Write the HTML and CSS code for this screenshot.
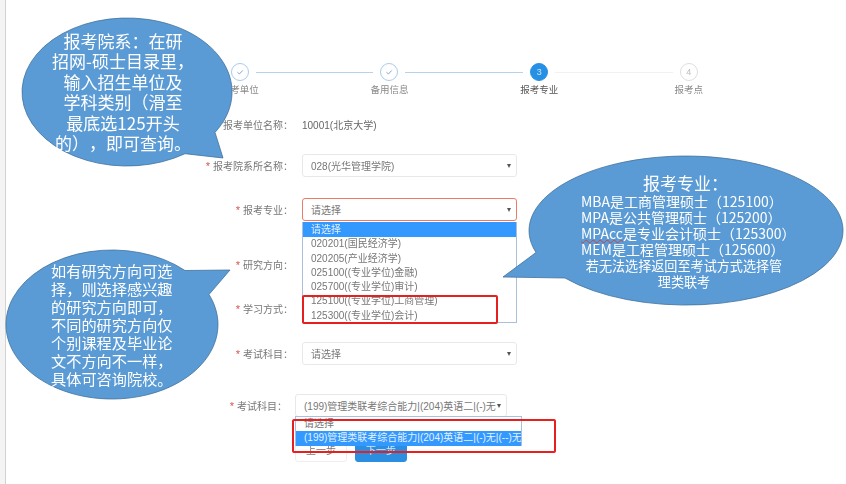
FILE: index.html
```html
<!DOCTYPE html>
<html lang="zh-CN">
<head>
<meta charset="utf-8">
<title>报考专业</title>
<link rel="stylesheet" href="styles.css">
</head>
<body>
<div class="page">
  <div class="rail"></div>
  <main class="main">
    <ol class="steps">
      <li class="step done first">
        <div class="track"><i class="seg"></i><span class="dot"><svg viewBox="0 0 10 10"><path d="M2.4 5.2 4.4 7 7.8 3.4"/></svg></span><i class="seg on"></i></div>
        <span class="step-label">报考单位</span>
      </li>
      <li class="step done">
        <div class="track"><i class="seg on"></i><span class="dot"><svg viewBox="0 0 10 10"><path d="M2.4 5.2 4.4 7 7.8 3.4"/></svg></span><i class="seg on"></i></div>
        <span class="step-label">备用信息</span>
      </li>
      <li class="step current">
        <div class="track"><i class="seg on"></i><span class="dot">3</span><i class="seg"></i></div>
        <span class="step-label">报考专业</span>
      </li>
      <li class="step todo last">
        <div class="track"><i class="seg"></i><span class="dot">4</span><i class="seg"></i></div>
        <span class="step-label">报考点</span>
      </li>
    </ol>

    <form class="form">
      <div class="row row-unit">
        <span class="label">报考单位名称：</span>
        <span class="value">10001(北京大学)</span>
      </div>
      <div class="row row-dept">
        <span class="label"><b>*</b>报考院系所名称：</span>
        <div class="select"><span>028(光华管理学院)</span></div>
      </div>
      <div class="row row-major">
        <span class="label"><b>*</b>报考专业：</span>
        <div class="select invalid"><span>请选择</span>
          <ul class="options major-options">
            <li class="sel">请选择</li>
            <li>020201(国民经济学)</li>
            <li>020205(产业经济学)</li>
            <li>025100((专业学位)金融)</li>
            <li>025700((专业学位)审计)</li>
            <li>125100((专业学位)工商管理)</li>
            <li>125300((专业学位)会计)</li>
          </ul>
        </div>
      </div>
      <div class="row row-dir">
        <span class="label"><b>*</b>研究方向：</span>
        <div class="select"></div>
      </div>
      <div class="row row-mode">
        <span class="label"><b>*</b>学习方式：</span>
        <div class="select"></div>
      </div>
      <div class="row row-exam">
        <span class="label"><b>*</b>考试科目：</span>
        <div class="select"><span>请选择</span></div>
      </div>
      <div class="row row-exam2 shifted">
        <span class="label"><b>*</b>考试科目：</span>
        <div class="select narrow"><span>(199)管理类联考综合能力|(204)英语二|(-)无</span>
          <ul class="options exam-options">
            <li>请选择</li>
            <li class="sel">(199)管理类联考综合能力|(204)英语二|(-)无|(--)无</li>
          </ul>
        </div>
      </div>
      <div class="row row-btns shifted">
        <span class="label"></span>
        <div class="buttons">
          <button type="button" class="btn">上一步</button>
          <button type="button" class="btn primary">下一步</button>
        </div>
      </div>
    </form>
  </main>

  <i class="redbox box-major"></i>
  <i class="redbox box-exam"></i>

  <aside class="callout c1">
    <svg viewBox="0 0 846 484"><path d="M215 132.400 223 158 185 153.700A105 74 0 1 1 215 132.400Z"/></svg>
    <p>报考院系<span class="p">：</span>在研<br>招网-硕士目录里<span class="p">，</span><br>输入招生单位及<br>学科类别<span class="p">（</span>滑至<br>最底选125开头<br>的<span class="p">），</span>即可查询。</p>
  </aside>
  <aside class="callout c2">
    <svg viewBox="0 0 846 484"><path d="M185 270.500 230 270 209 294.500A106 74.500 0 1 1 185 270.500Z"/></svg>
    <p>如有研究方向可选<br>择<span class="p">，</span>则选择感兴趣<br>的研究方向即可<span class="p">，</span><br>不同的研究方向仅<br>个别课程及毕业论<br>文不方向不一样<span class="p">，</span><br>具体可咨询院校。</p>
  </aside>
  <aside class="callout c3">
    <svg viewBox="0 0 846 484"><path d="M565 278 503 277 536 252.500A157 74.500 0 1 1 565 278Z"/></svg>
    <div class="c3-text">
      <h2>报考专业<span class="p">：</span></h2>
      <p class="left">MBA是工商管理硕士<span class="p">（</span>125100<span class="p">）</span><br>MPA是公共管理硕士<span class="p">（</span>125200<span class="p">）</span><br><u>MPAcc</u>是专业会计硕士<span class="p">（</span>125300<span class="p">）</span><br>MEM是工程管理硕士<span class="p">（</span>125600<span class="p">）</span></p>
      <p class="note">若无法选择返回至考试方式选择管<br>理类联考</p>
    </div>
  </aside>
</div>
</body>
</html>
```

FILE: styles.css
```css
* { box-sizing: border-box; }
html, body { margin: 0; padding: 0; }
body { background: #fff; font-family: "Liberation Sans", "Noto Sans CJK SC", sans-serif; }

.page { display: flex; width: 846px; height: 484px; overflow: hidden; position: relative; }
.rail { width: 6px; flex: none; background: #f4f4f4; border-right: 1px solid #d2d2d2; }
.main { flex: 1; padding-top: 63px; filter: blur(.4px); }

.steps { list-style: none; margin: 0 0 0 159px; padding: 0; display: flex; }
.step { width: 149.670px; display: flex; flex-direction: column; align-items: center; }
.track { display: flex; align-items: center; gap: 7px; width: 100%; height: 18px; }
.seg { flex: 1; height: 1px; background: #f1f1f1; }
.seg.on { background: #b7d3ec; }
.first .seg:first-child, .last .seg:last-child { background: transparent; }
.dot { width: 18px; height: 18px; border-radius: 50%; flex: none; display: flex; align-items: center; justify-content: center; font-size: 9px; border: 1px solid #ddd; color: #bbb; }
.done .dot { border-color: #a9cbe8; }
.dot svg { width: 10px; height: 10px; }
.dot path { fill: none; stroke: #7fa9cf; stroke-width: 1; }
.current .dot { background: #2590e4; border-color: #2590e4; color: #cfe6fa; }
.step-label { font-size: 9.500px; line-height: 12px; margin-top: 3px; color: #888; }
.current .step-label { color: #555; }

.form { margin-top: 17px; }
.row { display: flex; align-items: center; height: 23px; font-size: 10px; color: #777; }
.label { width: 287px; text-align: right; flex: none; margin-right: 9px; font-family: "Liberation Sans", "Noto Sans CJK TC", sans-serif; }
.label b { color: #d9534f; font-weight: 400; font-size: 11px; margin-right: 3px; }
.value { color: #666; }
.row-unit { margin-top: 0; }
.row-dept { margin-top: 18px; }
.row-major { margin-top: 21px; }
.row-dir { margin-top: 32px; }
.row-mode { margin-top: 21px; }
.row-exam { margin-top: 22px; }
.row-exam2 { margin-top: 29px; }
.row-btns { margin-top: 19px; height: 26px; }
.shifted .label { width: 281px; margin-right: 8px; }

.select { position: relative; width: 215px; height: 23px; flex: none; display: flex; align-items: center; padding-left: 8px; border: 1px solid #e8e8e8; border-radius: 3px; background: #fff; color: #777; }
.select.narrow { width: 212px; }
.select::after { content: ""; position: absolute; right: 5px; top: 9px; border: 2.500px solid transparent; border-top: 4px solid #555; border-bottom: 0; }
.select.invalid { border-color: #ec7b66; }

.options { position: absolute; list-style: none; margin: 0; padding: 0; background: #fff; border: 1px solid #a9bfda; border-top: 0; z-index: 2; line-height: 14.300px; overflow: hidden; }
.options li { padding-left: 8px; white-space: nowrap; color: #777; }
.options li.sel { background: #3399ff; color: #e4f1ff; }
.major-options { left: -1px; top: 23px; width: 215px; height: 101px; }
.major-options li.sel { padding-top: 1px; }
.exam-options { left: -1px; top: 21px; width: 227px; height: 30px; border-top: 1px solid #a9bfda; border-bottom: 0; line-height: 14.500px; }
.exam-options li:first-child { height: 14px; line-height: 13px; }

.buttons { display: flex; gap: 8px; }
.btn { width: 52px; height: 26px; border: 1px solid #eee; border-radius: 3px; background: #fff; color: #777; font: inherit; padding: 0; }
.btn.primary { background: #2b8ee0; border-color: #2b8ee0; color: #d3e8fa; }

.redbox { position: absolute; border: 2px solid #e5201f; border-radius: 2px; z-index: 3; }
.box-major { left: 302px; top: 295px; width: 196px; height: 29px; }
.box-exam { left: 292px; top: 419px; width: 264px; height: 34px; }

.callout { position: absolute; inset: 0; z-index: 4; pointer-events: none; color: #fff; font-family: "Noto Sans CJK SC", sans-serif; text-spacing-trim: space-all; }
.callout svg { position: absolute; inset: 0; width: 846px; height: 484px; }
.callout svg path { fill: #5b9bd5; stroke: #41719c; stroke-width: .8; }
.callout p { margin: 0; }
.callout .p { font-family: "Noto Sans CJK TC", sans-serif; }
.c1 p { position: absolute; left: 23px; top: 31px; width: 200px; text-align: center; font-size: 17px; line-height: 20.400px; }
.c2 p { position: absolute; left: 51px; top: 261px; white-space: nowrap; font-size: 15.200px; line-height: 18px; }
.c3-text { position: absolute; left: 581px; top: 174px; width: 210px; }
.c3-text h2 { margin: 0; font-size: 17px; font-weight: 400; line-height: 18px; text-align: center; width: 209px; }
.c3-text .left { font-size: 14px; line-height: 16px; margin-top: 1px; white-space: nowrap; }
.c3-text u { text-decoration: underline wavy #d0403c 1px; text-decoration-skip-ink: none; text-underline-offset: 0; }
.c3-text .note { font-size: 13.100px; line-height: 16px; text-align: center; margin-top: 1px; white-space: nowrap; width: 206px; }
```
